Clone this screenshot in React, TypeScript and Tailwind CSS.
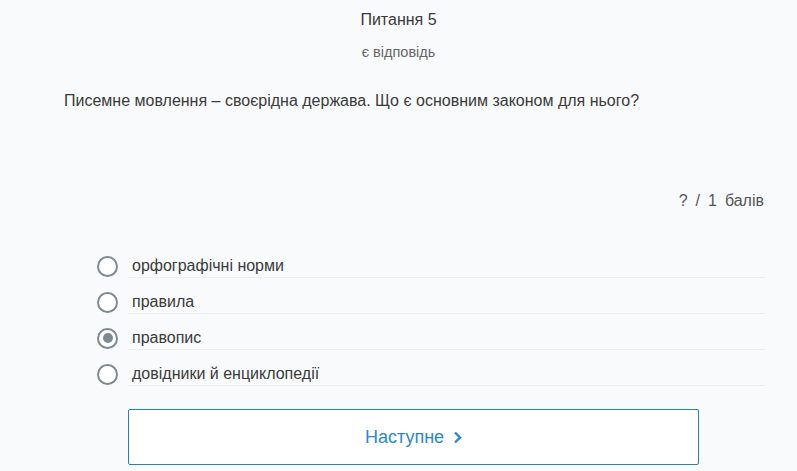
const options = [
  { label: "орфографічні норми", checked: false },
  { label: "правила", checked: false },
  { label: "правопис", checked: true },
  { label: "довідники й енциклопедії", checked: false },
];

function Radio({ checked }: { checked: boolean }) {
  return (
    <span className="flex h-[21px] w-[21px] shrink-0 items-center justify-center rounded-full border-2 border-[#7d8a90] bg-white">
      {checked && <span className="h-[10px] w-[10px] rounded-full bg-[#7d8a90]" />}
    </span>
  );
}

export default function App() {
  return (
    <div className="min-h-[471px] w-full bg-[#f9fafb] font-['Liberation_Sans',Arial,sans-serif] text-[#3a3a3a]">
      {/* Шапка */}
      <div className="pt-[11px] text-center">
        <div className="text-[16px] leading-[18px]">Питання 5</div>
        <div className="mt-[15px] text-[14.5px] leading-[17px] text-[#666]">є відповідь</div>
      </div>

      {/* Питання */}
      <div className="px-[64px] pt-[30px] text-[16px] leading-[20px]">
        Писемне мовлення – своєрідна держава. Що є основним законом для нього?
      </div>

      {/* Бали */}
      <div className="flex justify-end gap-[8px] pr-[33px] pt-[80px] text-[16px] leading-[20px] text-[#555]">
        <span>?</span>
        <span>/</span>
        <span>1</span>
        <span>балів</span>
      </div>

      {/* Варіанти */}
      <div className="pl-[97px] pr-[32px] pt-[31px]">
        {options.map((o) => (
          <div key={o.label} className="flex h-[36px]">
            <div className="flex items-center pt-[12px]">
              <Radio checked={o.checked} />
            </div>
            <div className="ml-[10px] flex flex-1 items-center border-b border-[#eceef0] pl-[4px] pt-[12px] text-[16px] leading-[20px]">
              {o.label}
            </div>
          </div>
        ))}
      </div>

      {/* Кнопка */}
      <div className="pl-[128px] pt-[23px]">
        <button className="flex h-[56px] w-[571px] items-center justify-center gap-[9px] rounded-[2px] border border-[#2a7fb5] bg-white text-[18px] text-[#2a88cf]">
          Наступне
          <svg width="9" height="13" viewBox="0 0 9 13" fill="none">
            <path d="M2 1.5 L7 6.5 L2 11.5" stroke="#2a88cf" strokeWidth="2.4" />
          </svg>
        </button>
      </div>
    </div>
  );
}
